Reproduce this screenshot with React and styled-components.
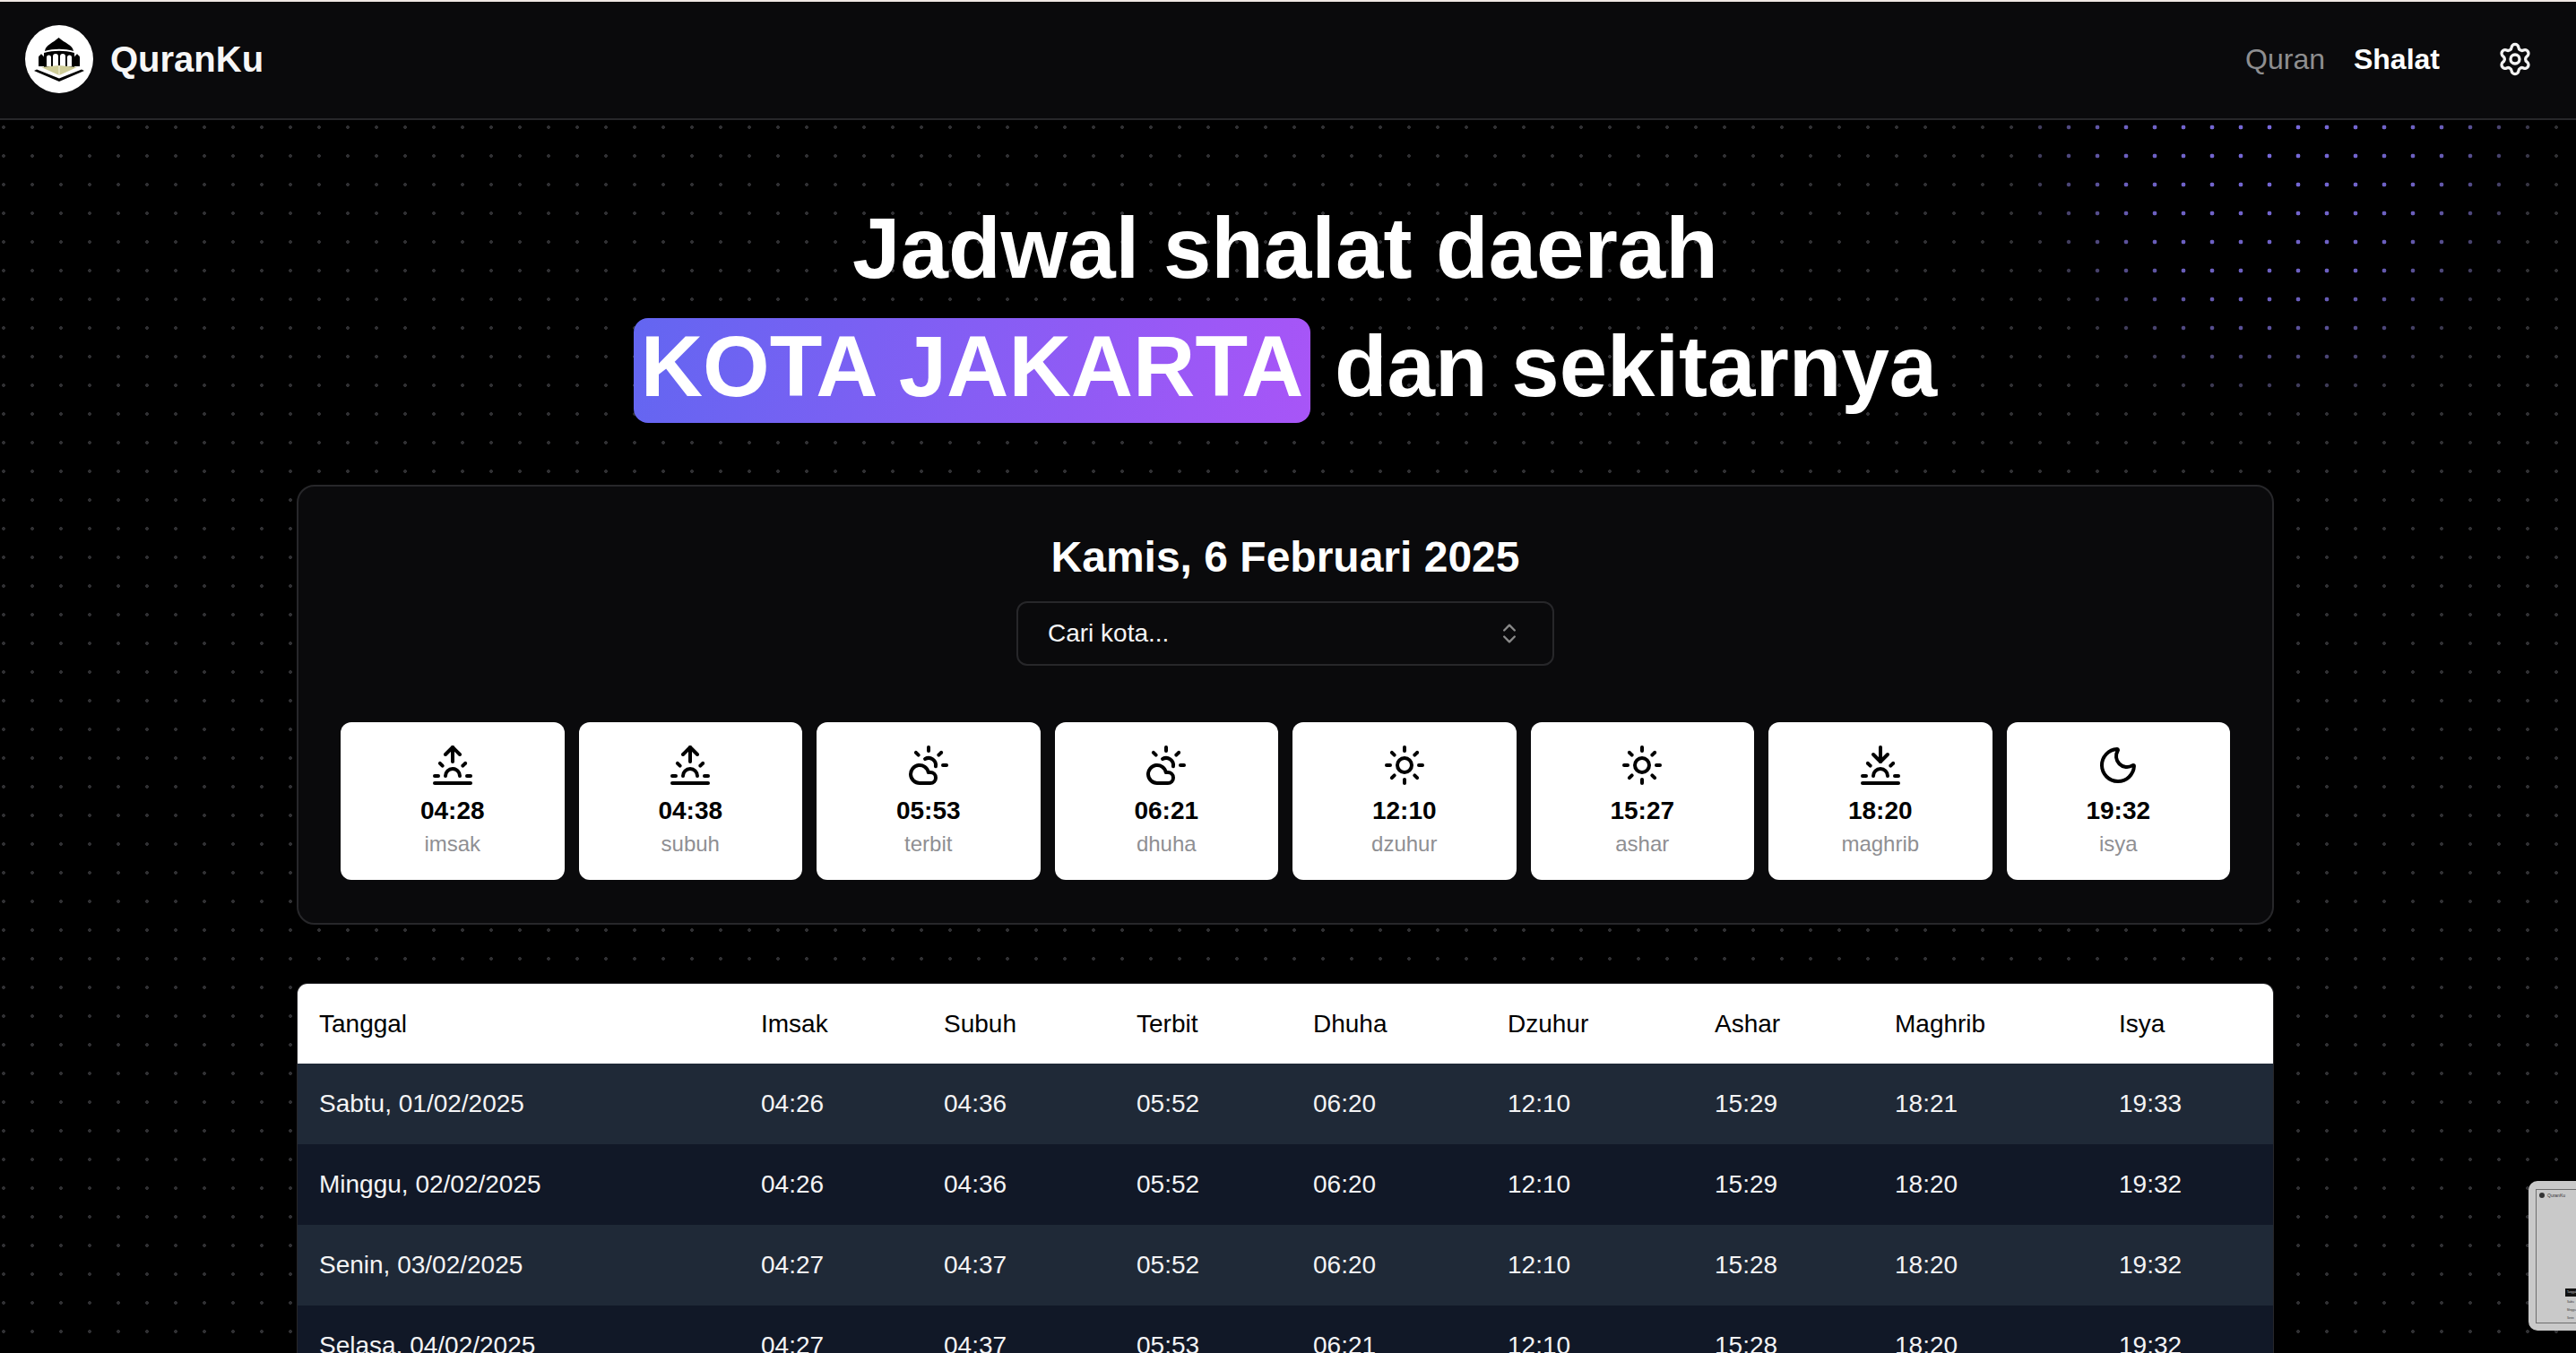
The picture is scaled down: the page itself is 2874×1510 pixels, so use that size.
import React from "react";
import styled, { createGlobalStyle } from "styled-components";
import {
  Settings,
  ChevronsUpDown,
  Sunrise,
  Sunset,
  CloudSun,
  Sun,
  Moon,
} from "lucide-react";

const GlobalStyle = createGlobalStyle`
  html, body {
    margin: 0;
    height: 100%;
    overflow: hidden;
    background: #000;
  }
  body {
    font-family: "Liberation Sans", Arial, sans-serif;
    color: #fff;
  }
`;

const todayTimes = [
  { name: "imsak", time: "04:28", Icon: Sunrise },
  { name: "subuh", time: "04:38", Icon: Sunrise },
  { name: "terbit", time: "05:53", Icon: CloudSun },
  { name: "dhuha", time: "06:21", Icon: CloudSun },
  { name: "dzuhur", time: "12:10", Icon: Sun },
  { name: "ashar", time: "15:27", Icon: Sun },
  { name: "maghrib", time: "18:20", Icon: Sunset },
  { name: "isya", time: "19:32", Icon: Moon },
];

const columns = [
  { label: "Tanggal", width: 492 },
  { label: "Imsak", width: 204 },
  { label: "Subuh", width: 215 },
  { label: "Terbit", width: 197 },
  { label: "Dhuha", width: 217 },
  { label: "Dzuhur", width: 231 },
  { label: "Ashar", width: 201 },
  { label: "Maghrib", width: 250 },
  { label: "Isya", width: 197 },
];

const monthRows = [
  ["Sabtu, 01/02/2025", "04:26", "04:36", "05:52", "06:20", "12:10", "15:29", "18:21", "19:33"],
  ["Minggu, 02/02/2025", "04:26", "04:36", "05:52", "06:20", "12:10", "15:29", "18:20", "19:32"],
  ["Senin, 03/02/2025", "04:27", "04:37", "05:52", "06:20", "12:10", "15:28", "18:20", "19:32"],
  ["Selasa, 04/02/2025", "04:27", "04:37", "05:53", "06:21", "12:10", "15:28", "18:20", "19:32"],
];

const Logo = () => (
  <LogoBadge viewBox="0 0 76 76">
    <circle cx="38" cy="38" r="38" fill="#fff" />
    {/* dome */}
    <path d="M22 29c1-7 9-9 15.500-15C44 20 53 22 54 29c-10-3-22-3-32 0z" fill="#000" />
    {/* hall with arches */}
    <path
      d="M21 31c11-3 23-3 34 0v16H21z M24 46v-10a2.500 2.500 0 0 1 5 0v10z M31 46v-11a3 3 0 0 1 6 0v11z M39 46v-11a3 3 0 0 1 6 0v11z M47 46v-10a2.500 2.500 0 0 1 5 0v10z"
      fill="#000"
      fillRule="evenodd"
    />
    {/* side towers */}
    <path d="M15 46V36c0-2 2-2 3-4 1 2 3 2 3 4v10z M55 46V36c0-2 2-2 3-4 1 2 3 2 3 4v10z" fill="#000" />
    {/* pages */}
    <path d="M18 47l20-2 20 2-20 9z" fill="#cfcd98" />
    <path d="M38 45v11" stroke="#f2f0d8" strokeWidth="1.2" />
    {/* book cover */}
    <path d="M10 51l3-1.500 25 10 25-10 3 1.500-28 12z" fill="#000" />
  </LogoBadge>
);

const App = () => {
  return (
    <Page>
      <GlobalStyle />
      <TopStrip />
      <Header>
        <Brand>
          <Logo />
          <BrandName>QuranKu</BrandName>
        </Brand>
        <Nav>
          <NavLink>Quran</NavLink>
          <NavLink $active>Shalat</NavLink>
          <SettingsButton>
            <Settings size={40} strokeWidth={2} />
          </SettingsButton>
        </Nav>
      </Header>

      <Main>
        <Title>
          Jadwal shalat daerah
          <br />
          <Highlight>KOTA JAKARTA</Highlight> dan sekitarnya
        </Title>

        <TodayCard>
          <DateTitle>Kamis, 6 Februari 2025</DateTitle>
          <CitySelect>
            <span>Cari kota...</span>
            <ChevronsUpDown size={28} color="#8a8a8a" />
          </CitySelect>
          <PrayerGrid>
            {todayTimes.map(({ name, time, Icon }) => (
              <PrayerCard key={name}>
                <Icon size={48} strokeWidth={2} />
                <PrayerTime>{time}</PrayerTime>
                <PrayerName>{name}</PrayerName>
              </PrayerCard>
            ))}
          </PrayerGrid>
        </TodayCard>

        <TableWrap>
          <Table>
            <colgroup>
              {columns.map((c) => (
                <col key={c.label} width={c.width} />
              ))}
            </colgroup>
            <thead>
              <HeadRow>
                {columns.map((c) => (
                  <HeadCell key={c.label}>{c.label}</HeadCell>
                ))}
              </HeadRow>
            </thead>
            <tbody>
              {monthRows.map((row) => (
                <BodyRow key={row[0]}>
                  {row.map((val, i) => (
                    <BodyCell key={i}>{val}</BodyCell>
                  ))}
                </BodyRow>
              ))}
            </tbody>
          </Table>
        </TableWrap>
      </Main>

      <Thumbnail>
        <ThumbFrame>
          <ThumbBrand>
            <ThumbLogo />
            QuranKu
          </ThumbBrand>
          <ThumbTable>
            <ThumbHead>Tanggal</ThumbHead>
            <ThumbLine>Sabtu</ThumbLine>
            <ThumbLine>Minggu</ThumbLine>
            <ThumbLine>Senin</ThumbLine>
          </ThumbTable>
        </ThumbFrame>
      </Thumbnail>
    </Page>
  );
};

const Page = styled.div`
  position: relative;
  height: 100vh;
  overflow: hidden;
  background-color: #000;
  background-image: radial-gradient(circle, #303033 1.6px, transparent 2.2px);
  background-size: 32px 32px;
  background-position: -12px -2px;

  /* purple glow on the dots, top right */
  &::before {
    content: "";
    position: absolute;
    inset: 0;
    background-image: radial-gradient(circle, #7a6be0 2.1px, transparent 2.7px);
    background-size: 32px 32px;
    background-position: -12px -2px;
    -webkit-mask-image: radial-gradient(
      ellipse 300px 340px at 2540px 130px,
      #000 0%,
      rgba(0, 0, 0, 0.8) 60%,
      transparent 100%
    );
    mask-image: radial-gradient(
      ellipse 300px 340px at 2540px 130px,
      #000 0%,
      rgba(0, 0, 0, 0.8) 60%,
      transparent 100%
    );
  }
`;

const TopStrip = styled.div`
  position: relative;
  height: 2px;
  background: #f0e8e4;
`;

const Header = styled.header`
  position: relative;
  height: 128px;
  display: flex;
  align-items: center;
  justify-content: space-between;
  padding: 0 48px 2px 28px;
  background: #0a0a0c;
  border-bottom: 2px solid #27272a;
`;

const Brand = styled.div`
  display: flex;
  align-items: center;
  gap: 19px;
`;

const LogoBadge = styled.svg`
  width: 76px;
  height: 76px;
`;

const BrandName = styled.div`
  font-size: 40px;
  font-weight: 700;
  color: #f7f7f7;
`;

const Nav = styled.nav`
  display: flex;
  align-items: center;
  gap: 32px;
`;

const NavLink = styled.a`
  font-size: 32px;
  font-weight: ${(p) => (p.$active ? 700 : 400)};
  color: ${(p) => (p.$active ? "#fff" : "#8e8e90")};
`;

const SettingsButton = styled.div`
  display: flex;
  margin-left: 32px;
  color: #f2f2f2;
`;

const Main = styled.main`
  position: relative;
  display: flex;
  flex-direction: column;
  align-items: center;
  padding: 77px 6px 0 0;
`;

const Title = styled.h1`
  margin: 0;
  font-size: 96px;
  font-weight: 700;
  line-height: 132px;
  text-align: center;
`;

const Highlight = styled.span`
  padding: 0 8px 10px;
  border-radius: 16px;
  background: linear-gradient(100deg, #6366f1, #a855f7);
`;

const TodayCard = styled.section`
  box-sizing: border-box;
  width: 2206px;
  height: 491px;
  margin-top: 66px;
  padding: 48px 47px;
  display: flex;
  flex-direction: column;
  align-items: center;
  background: #0a0a0c;
  border: 2px solid #27272a;
  border-radius: 20px;
`;

const DateTitle = styled.h2`
  margin: 0;
  font-size: 48px;
  font-weight: 700;
  line-height: 62px;
`;

const CitySelect = styled.div`
  box-sizing: border-box;
  width: 600px;
  height: 72px;
  margin-top: 18px;
  padding: 0 34px 0 33px;
  display: flex;
  align-items: center;
  justify-content: space-between;
  font-size: 28px;
  color: #f4f4f5;
  border: 2px solid #27272a;
  border-radius: 12px;
`;

const PrayerGrid = styled.div`
  align-self: stretch;
  display: grid;
  grid-template-columns: repeat(8, 1fr);
  gap: 16px;
  margin-top: 63px;
`;

const PrayerCard = styled.div`
  box-sizing: border-box;
  height: 176px;
  padding-top: 24px;
  display: flex;
  flex-direction: column;
  align-items: center;
  background: #fff;
  color: #000;
  border-radius: 12px;
`;

const PrayerTime = styled.div`
  margin-top: 7px;
  font-size: 28px;
  font-weight: 700;
  line-height: 40px;
`;

const PrayerName = styled.div`
  font-size: 24px;
  line-height: 34px;
  color: #8f8f93;
`;

const TableWrap = styled.div`
  box-sizing: border-box;
  width: 2206px;
  margin-top: 65px;
  border: 1px solid #27272a;
  border-bottom: 0;
  border-radius: 12px 12px 0 0;
  overflow: hidden;
`;

const Table = styled.table`
  width: 100%;
  table-layout: fixed;
  border-collapse: collapse;
  font-size: 28px;
`;

const HeadRow = styled.tr`
  height: 89px;
  background: #fff;
`;

const HeadCell = styled.th`
  padding: 0 25px;
  font-weight: 400;
  text-align: left;
  color: #000;

  &:first-child {
    padding-left: 24px;
  }
`;

const BodyRow = styled.tr`
  height: 90px;
  color: #f4f4f5;
  background: #111827;

  &:nth-child(odd) {
    background: #1f2937;
  }
`;

const BodyCell = styled.td`
  padding: 0 25px;

  &:first-child {
    padding-left: 24px;
  }
`;

/* macOS screenshot preview floating in the corner */
const Thumbnail = styled.div`
  position: fixed;
  top: 1318px;
  right: 0;
  width: 53px;
  height: 167px;
  box-sizing: border-box;
  padding: 9px 0 8px 8px;
  background: #c9c9c9;
  border-radius: 10px 0 0 10px;
`;

const ThumbFrame = styled.div`
  height: 100%;
  box-sizing: border-box;
  padding: 3px 0 0 3px;
  display: flex;
  flex-direction: column;
  justify-content: space-between;
  border: 1px solid #6e6e6e;
  border-right: 0;
  overflow: hidden;
`;

const ThumbBrand = styled.div`
  display: flex;
  align-items: center;
  gap: 3px;
  font-size: 5px;
  color: #333;
`;

const ThumbLogo = styled.span`
  width: 6px;
  height: 6px;
  border-radius: 50%;
  background: #333;
`;

const ThumbTable = styled.div`
  margin-left: 29px;
  font-size: 3px;
  color: #333;
`;

const ThumbHead = styled.div`
  height: 9px;
  margin-bottom: 2px;
  padding-left: 2px;
  line-height: 9px;
  background: #111;
  color: #ccc;
`;

const ThumbLine = styled.div`
  height: 9px;
  padding-left: 2px;
  line-height: 9px;
`;

export default App;
